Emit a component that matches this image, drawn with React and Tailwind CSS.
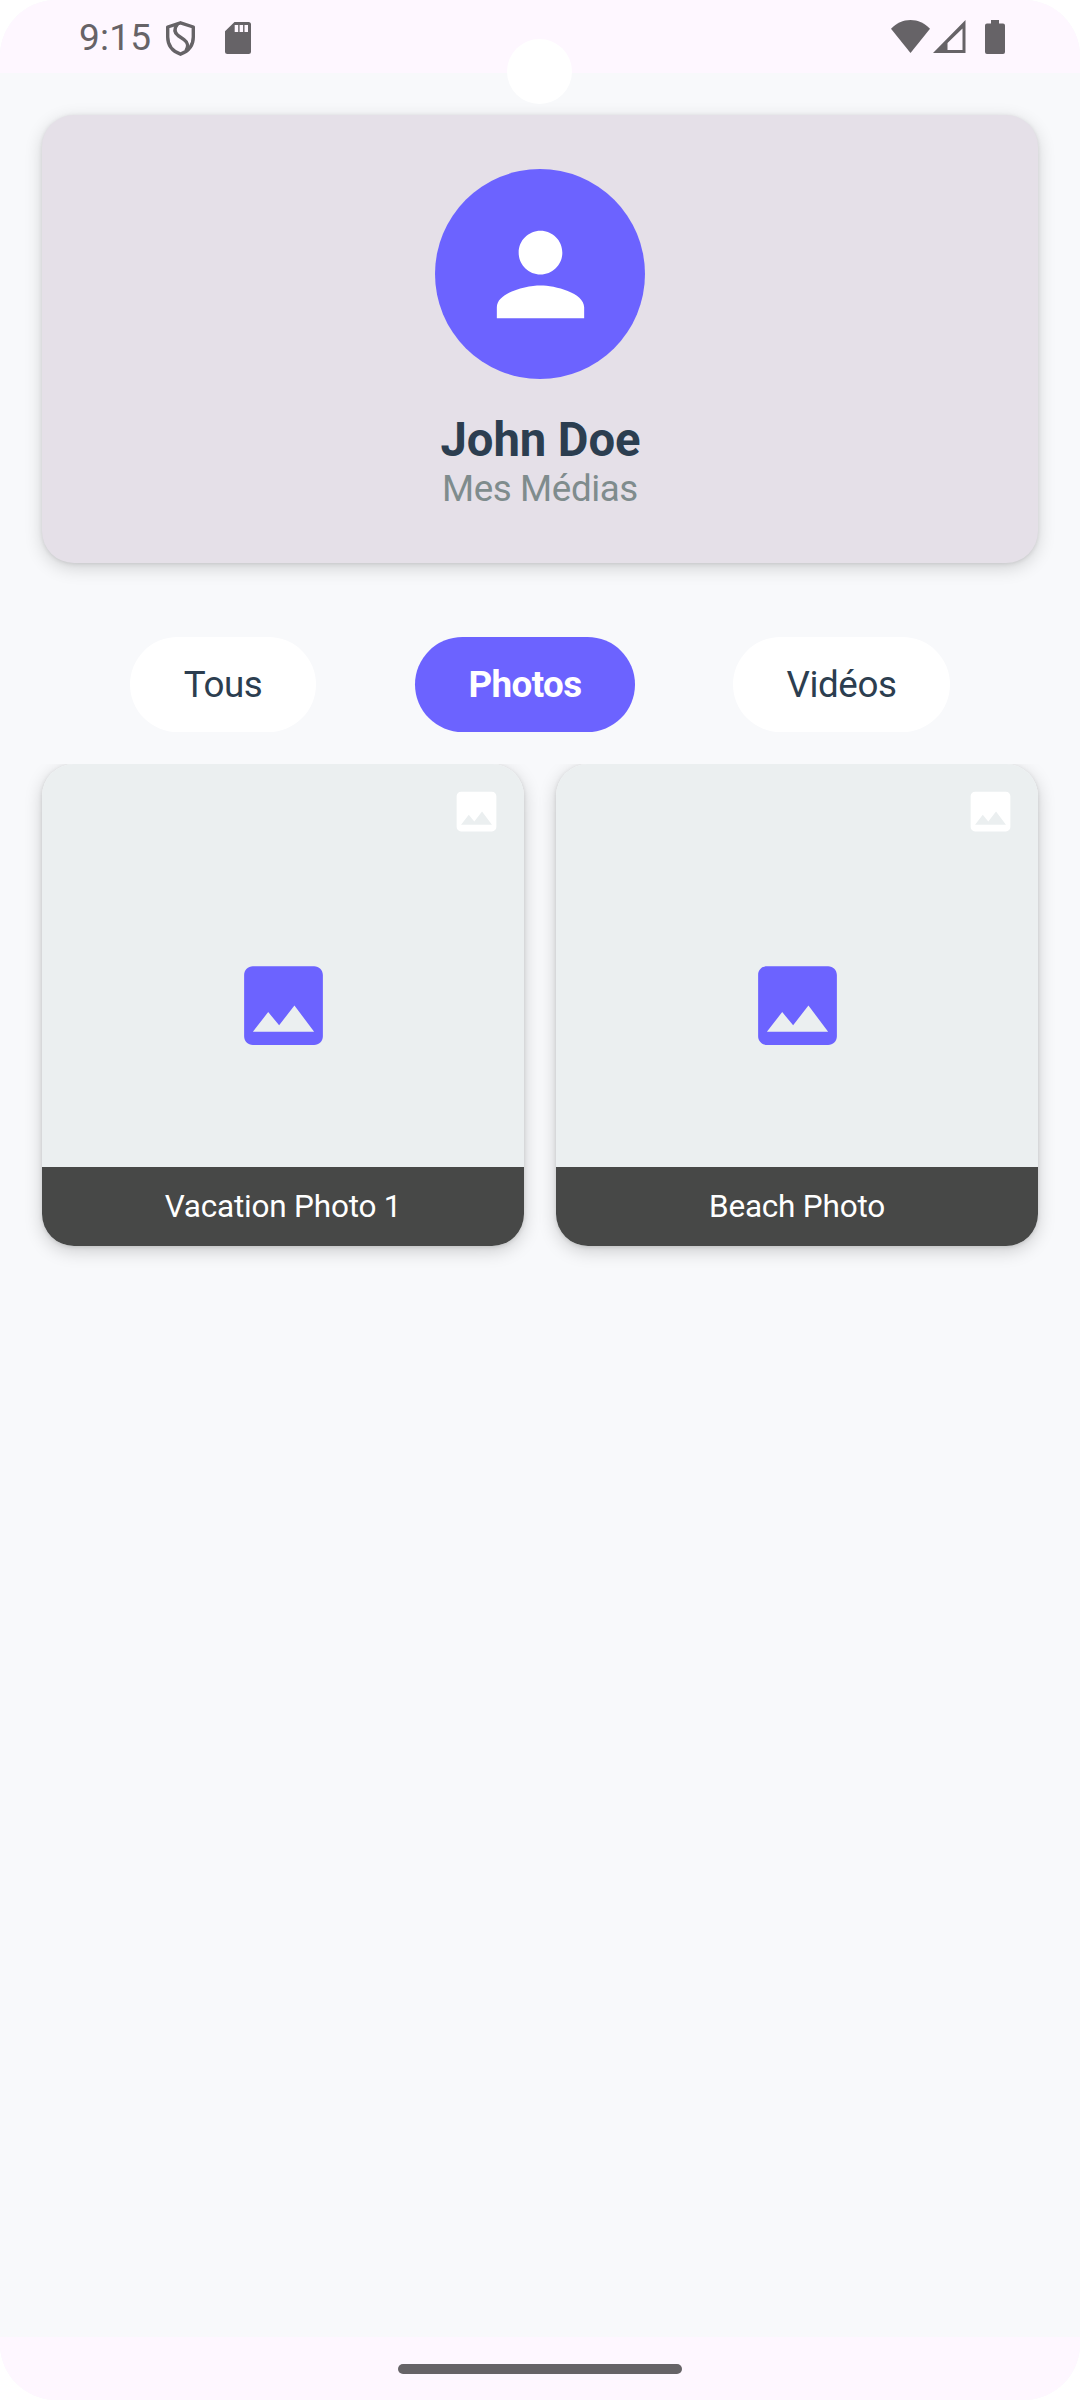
import React from "react";

const FILTERS = [
  { label: "Tous", box: "w-[186px]", tone: "bg-white text-[#2c3e50]", text: "tracking-[-0.4px]" },
  { label: "Photos", box: "w-[220px]", tone: "bg-[#6c63ff] font-bold text-white", text: "ml-px tracking-[-0.6px]" },
  { label: "Vidéos", box: "w-[217px]", tone: "bg-white text-[#2c3e50]", text: "tracking-[-0.4px]" },
];

const MEDIA = ["Vacation Photo 1", "Beach Photo"];

function ImageIcon({ className }) {
  return (
    <svg viewBox="0 0 24 24" fill="currentColor" className={className}>
      <path d="M21 19V5c0-1.1-.9-2-2-2H5c-1.1 0-2 .9-2 2v14c0 1.1.9 2 2 2h14c1.1 0 2-.9 2-2zM8.5 13.5l2.5 3.01L14.5 12l4.5 6H5l3.5-4.5z" />
    </svg>
  );
}

function StatusBar() {
  return (
    <header className="flex h-[73px] items-start justify-between bg-[#fef7ff] pr-[75px] pl-[79px] text-[#666367]">
      <div className="flex pt-[15px]">
        <span className="w-[87px] pt-px text-[37px] leading-[44px] tracking-[0.2px]">9:15</span>
        <svg viewBox="0 0 29 35" className="mt-[6px] h-[35px] w-[29px]" fill="none" stroke="currentColor" strokeWidth="3.4" strokeLinejoin="round">
          <path d="M14.5 1.8 27.3 6v10c0 8-4.800 14.200-12.800 17.200C6.500 30.200 1.700 24 1.700 16V6z" />
          <path d="M11.500 3C8.300 7.200 8.200 11.500 12 14.500l6 4.200c4.500 3.300 4.500 6.300 2 11" />
        </svg>
        <svg viewBox="0 0 26 32" className="mt-[7px] ml-[30px] h-[32px] w-[26px]" fill="currentColor" fillRule="evenodd">
          <path d="M9.500 0H23.500A2.500 2.500 0 0 1 26 2.500V29.500A2.500 2.500 0 0 1 23.500 32H2.500A2.500 2.500 0 0 1 0 29.500V9.300zM9.700 3v7h3.500V3zM14.600 3v7h3.500V3zM19.500 3v7H23V3z" />
        </svg>
      </div>
      <div className="flex pt-5">
        <svg viewBox="0 0 39 33" className="h-[33px] w-[39px]" fill="currentColor">
          <path d="M19.500 33 0 8.800C5.500 3.200 12 0 19.500 0S33.500 3.200 39 8.800z" />
        </svg>
        <svg viewBox="0 0 33 33" className="ml-[3px] h-[33px] w-[33px]" fill="currentColor" fillRule="evenodd">
          <path d="M0 33 32.500 0V33zM14.500 23v7H29.500V8.500z" />
        </svg>
        <svg viewBox="0 0 20 34" className="ml-[19px] h-[34px] w-[20px]" fill="currentColor">
          <path d="M6 0h8v3.500h4A2 2 0 0 1 20 5.500V32a2 2 0 0 1-2 2H2a2 2 0 0 1-2-2V5.500a2 2 0 0 1 2-2h4z" />
        </svg>
      </div>
    </header>
  );
}

function MediaTile({ title }) {
  return (
    <article className="relative flex h-[482px] flex-1 flex-col overflow-hidden rounded-[32px] bg-[#ebeff0]">
      <div className="flex h-[403px] items-center justify-center pt-[79px]">
        <ImageIcon className="size-[105px] text-[#6c63ff]" />
      </div>
      <ImageIcon className="absolute top-[21px] right-[21px] size-[53px] text-white" />
      <div className="flex h-[79px] items-center justify-center bg-[#474847] text-[31.500px] leading-none text-white">
        <span className="tracking-[-0.2px]">{title}</span>
      </div>
    </article>
  );
}

export default function App() {
  return (
    <div className="h-[2400px] w-[1080px] bg-white font-['Roboto',sans-serif]">
      <div className="relative flex h-full flex-col overflow-hidden rounded-[56px] bg-[#f8f9fb]">
        <StatusBar />
        <div className="absolute top-[39px] left-[507px] size-[65px] rounded-full bg-white" />

        <section className="mx-[42px] mt-[42px] flex h-[448px] flex-col items-center rounded-[32px] bg-[#e5e0e8] pt-[54px] shadow-[0_5px_18px_rgba(0,0,0,0.16),0_1px_4px_rgba(0,0,0,0.1)]">
          <div className="flex size-[210px] items-center justify-center rounded-full bg-[#6c63ff]">
            <svg viewBox="0 0 24 24" fill="currentColor" className="size-[131px] text-white">
              <path d="M12 12c2.210 0 4-1.790 4-4s-1.790-4-4-4-4 1.790-4 4 1.790 4 4 4zm0 2c-2.670 0-8 1.340-8 4v2h16v-2c0-2.660-5.330-4-8-4z" />
            </svg>
          </div>
          <h1 className="mt-[33px] ml-px text-[47.250px] leading-[56px] font-bold tracking-[-0.1px] text-[#2c3e50]">John Doe</h1>
          <p className="text-[36.750px] leading-[42px] tracking-[-0.4px] text-[#7f8c8d]">Mes Médias</p>
        </section>

        <nav className="mt-[74px] flex h-[95px] gap-[98.500px] pl-[130px]">
          {FILTERS.map((f) => (
            <button key={f.label} className={`flex shrink-0 items-center justify-center rounded-full pt-[2px] text-[36.750px] leading-none ${f.box} ${f.tone}`}>
              <span className={f.text}>{f.label}</span>
            </button>
          ))}
        </nav>

        <main className="mt-[32px] flex flex-1 items-start gap-[32px] overflow-hidden px-[42px]">
          {MEDIA.map((title) => (
            <div key={title} className="flex flex-1 rounded-[32px] shadow-[0_5px_18px_rgba(0,0,0,0.18),0_1px_4px_rgba(0,0,0,0.12)]">
              <MediaTile title={title} />
            </div>
          ))}
        </main>

        <footer className="flex h-[63px] items-start justify-center bg-[#fef7ff] pt-[27px]">
          <div className="h-[10px] w-[284px] rounded-full bg-[#666367]" />
        </footer>
      </div>
    </div>
  );
}
